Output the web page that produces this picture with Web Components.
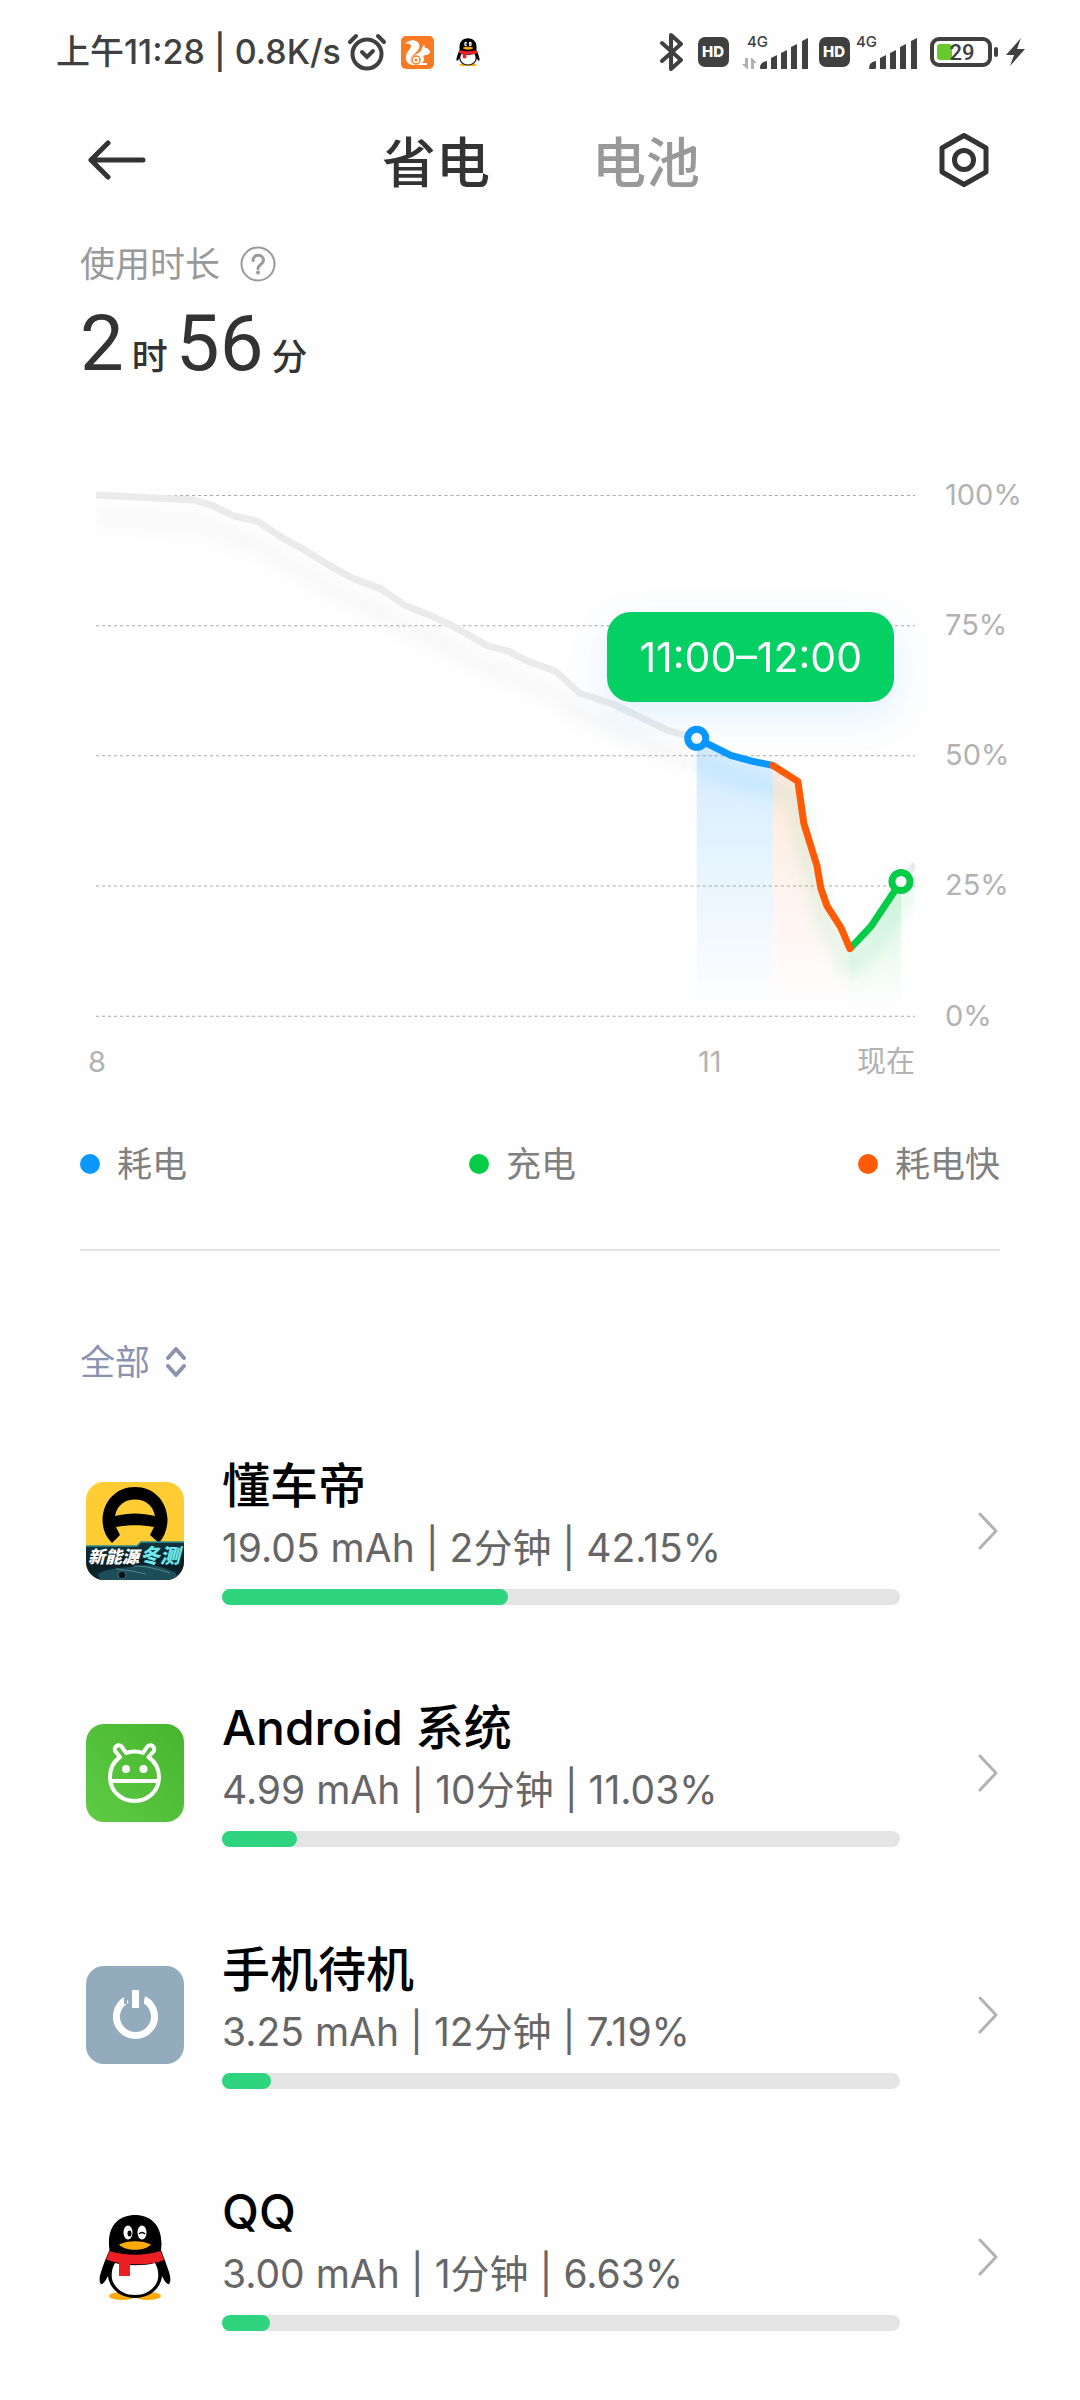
<!DOCTYPE html>
<html lang="zh-CN">
<head>
<meta charset="utf-8">
<meta name="viewport" content="width=device-width, initial-scale=1">
<title>省电</title>
<style>
  html { background: #fefefe; }
  body { margin: 0; font-family: Inter, "Noto Sans CJK SC", sans-serif; color: #333; }
</style>
</head>
<body>
<battery-page>
  <status-bar slot="status" level="29">上午11:28 | 0.8K/s</status-bar>
  <page-header slot="header"><span slot="active">省电</span><span slot="other">电池</span></page-header>
  <usage-time hours="2" minutes="56">使用时长</usage-time>
  <usage-chart>11:00–12:00</usage-chart>
  <chart-legend>
    <legend-item color="#0a98ff">耗电</legend-item>
    <legend-item color="#05cc47">充电</legend-item>
    <legend-item color="#ff5a05">耗电快</legend-item>
  </chart-legend>
  <filter-button>全部</filter-button>
  <app-list slot="list">
    <app-row share="42.15"><dongchedi-icon slot="icon"></dongchedi-icon><span slot="name">懂车帝</span>19.05 mAh | 2分钟 | 42.15%</app-row>
    <app-row share="11.03"><android-icon slot="icon"></android-icon><span slot="name">Android 系统</span>4.99 mAh | 10分钟 | 11.03%</app-row>
    <app-row share="7.19"><standby-icon slot="icon"></standby-icon><span slot="name">手机待机</span>3.25 mAh | 12分钟 | 7.19%</app-row>
    <app-row share="6.63"><qq-icon slot="icon"></qq-icon><span slot="name">QQ</span>3.00 mAh | 1分钟 | 6.63%</app-row>
  </app-list>
</battery-page>

<script>
// Registers an element whose shadow root is built from render(host).
function element(name, render) {
  customElements.define(name, class extends HTMLElement {
    constructor() {
      super();
      const root = this.attachShadow({ mode: 'open' });
      const t = document.createElement('template');
      t.innerHTML = `<style>
        :host { display: block; }
        * { box-sizing: border-box; }
        svg { display: block; flex: none; }
        button { font: inherit; color: inherit; background: none; border: 0; padding: 0; margin: 0; cursor: pointer; }
      </style>` + render(this);
      root.append(t.content.cloneNode(true));
    }
  });
}

element('battery-page', () => `
  <style>
    main { padding: 0 80px; }
  </style>
  <slot name="status"></slot>
  <slot name="header"></slot>
  <main><slot></slot></main>
  <slot name="list"></slot>`);

/* ---------- icons ---------- */
element('dongchedi-icon', () => `
  <style>:host { width: 98px; height: 98px; border-radius: 18px; overflow: hidden; }</style>
  <svg width="98" height="98" viewBox="0 0 98 98" aria-hidden="true">
    <defs><linearGradient id="g" x1="0" y1="0" x2="0" y2="1"><stop offset="0" stop-color="#12343c"/><stop offset=".6" stop-color="#0a1d24"/><stop offset="1" stop-color="#0b2a33"/></linearGradient></defs>
    <rect width="98" height="98" fill="#ffcc33"/>
    <path d="M26 61C19 54 16.500 46 16.500 37 17.500 18 31 5 49 5s31.500 13 32.500 32c0 9-2.500 17-8.500 24L64 53l4-8c-12-2.500-26-2.500-38 0l4 8z" fill="#000"/>
    <path d="M29 34C31 23 39 17.500 49 17.500S67 23 69 34C56 30.500 42 30.500 29 34z" fill="#ffcc33"/>
    <path d="M0 64h51l4-4h43v38H0z" fill="url(#g)"/>
    <path d="M0 64h51l4-4h43" fill="none" stroke="#2b8f92" stroke-width="1.500"/>
    <path d="M12 92c10-6 22-6 32-7 14-4 30-2 46 6l2 7H14z" fill="#1d4d58"/>
    <path d="M30 87c14 1 24 4 30 5M48 84c12 0 24 3 36 7" fill="none" stroke="#4a8b93" stroke-width="1"/>
    <circle cx="36" cy="93" r="4" fill="#081418" stroke="#3b7078"/>
    <text x="2" y="81" font-size="17" font-weight="900" font-style="italic" fill="#fff" font-family="Noto Sans CJK SC, sans-serif">新能源</text>
    <text x="54" y="81" font-size="20" font-weight="900" font-style="italic" fill="#6ee8ea" font-family="Noto Sans CJK SC, sans-serif">冬测</text>
  </svg>`);

element('android-icon', () => `
  <style>:host { width: 98px; height: 98px; border-radius: 18px; overflow: hidden; }</style>
  <svg width="98" height="98" viewBox="0 0 98 98" aria-hidden="true">
    <defs><linearGradient id="g" x1="0" y1="1" x2="1" y2="0"><stop offset="0" stop-color="#5fcb45"/><stop offset="1" stop-color="#47b52d"/></linearGradient></defs>
    <rect width="98" height="98" fill="url(#g)"/>
    <g fill="none" stroke="#fff" stroke-width="4" stroke-linejoin="round">
      <path d="M34 33 29.500 27.500a3.800 3.800 0 0 1 6.500-4.500l4 6c5.500-2 12-2 17 0l4-6a3.800 3.800 0 0 1 6.500 4.500L62.500 33C69.500 38 73 45 73 53c0 14-11 24-24.500 24S24 67 24 53c0-8 3-15 10-20z"/>
      <path d="M24 57h49"/>
    </g>
    <circle cx="40" cy="45" r="4" fill="#fff"/><circle cx="57.500" cy="45" r="4" fill="#fff"/>
  </svg>`);

element('standby-icon', () => `
  <style>:host { width: 98px; height: 98px; border-radius: 18px; overflow: hidden; }</style>
  <svg width="98" height="98" viewBox="0 0 98 98" aria-hidden="true">
    <rect width="98" height="98" fill="#92abbd"/>
    <path d="M58 33.500a19 19 0 1 1-17 0" fill="none" stroke="#fff" stroke-width="7"/>
    <path d="M38 27h3v11h-3zM58 27h-3v11h3z" fill="#92abbd"/>
    <path d="M46 24h7v18h-7z" fill="#fff"/>
  </svg>`);

const penguin = `
    <ellipse cx="36" cy="88" rx="13" ry="4" fill="#faab0b"/><ellipse cx="62" cy="88" rx="13" ry="4" fill="#faab0b"/>
    <path d="M23.500 42C20 18 33 7 49 7s29 11 26 35c3 8 5 13 7 19 3 8 3 13 1 15-2 1-5-4-7-8-1 12-12 22-27 22S23 80 22 68c-2 4-5 9-7 8-2-2-2-7 1-15 2-6 4-11 7.500-19z" fill="#000"/>
    <path d="M29 55c10 3 30 3 40 0 4 7 4 14 2 19-4 8-11 13-22 13s-18-5-22-13c-2-5-2-12 2-19z" fill="#fff"/>
    <ellipse cx="42" cy="24.500" rx="4.500" ry="7" fill="#fff"/><ellipse cx="56" cy="24.500" rx="4.500" ry="7" fill="#fff"/>
    <ellipse cx="43.500" cy="25.500" rx="2" ry="3" fill="#000"/><path d="M53 26q3-3 6 0" fill="none" stroke="#000" stroke-width="1.500"/>
    <path d="M33 36.500c8-4.500 24-4.500 32 0-6 7-26 7-32 0z" fill="#faab0b"/>
    <path d="M23.500 43c16 5 35 5 51 0l3.500 9c-9 4-23 5-34 4v12H33V55c-5-1-9-2-13-3.500z" fill="#eb1f24"/>`;

element('qq-icon', () => `
  <style>:host { width: 98px; height: 98px; }</style>
  <svg width="98" height="98" viewBox="0 0 98 98" aria-hidden="true">${penguin}</svg>`);

element('hd-icon', () => `
  <svg width="31" height="30" viewBox="0 0 31 30" aria-hidden="true">
    <rect width="31" height="30" rx="7" fill="#404040"/>
    <text x="15" y="20" text-anchor="middle" font-size="15" font-weight="800" fill="#fff" font-family="Inter, sans-serif">HD</text>
  </svg>`);

element('signal-icon', host => `
  <svg width="68" height="48" viewBox="0 -6 68 48" aria-hidden="true">
    <text x="6" y="13" font-size="15" font-weight="500" fill="#404040" font-family="Inter, sans-serif">4G</text>
    ${host.hasAttribute('data') ? '<path d="M4 24h3v11H6L1 30h3zM10 35V24h1l5 5h-3v6z" fill="#b0b0b0"/>' : ''}
    <path d="M19 34q0-6 7-7v7q0 1-1 1h-5q-1 0-1-1zM30 24l6-3v14h-6zM40 19l6-3v19h-6zM50 13l6-3v25h-6zM61 7l6-3v31h-6z" fill="#404040"/>
  </svg>`);

/* ---------- status bar ---------- */
element('status-bar', host => `
  <style>
    :host { color: #404040; }
    div { display: flex; align-items: center; }
    .bar { height: 104px; padding: 0 55px 0 56px; justify-content: space-between; }
    .left { font-size: 34px; line-height: 48px; font-weight: 500; }
    .alarm { margin-left: 6px; }
    .uc { margin-left: 14px; }
    .qq { margin-left: 18px; }
    .sim1 { margin: 0 12px 0 14px; }
    .sim2 { margin-left: 10px; }
    .bat { margin: 0 7px 0 12px; }
  </style>
  <div class="bar">
    <div class="left">
      <span><slot></slot></span>
      <svg class="alarm" width="40" height="38" viewBox="0 0 40 38" fill="none" stroke="#404040" stroke-width="4" stroke-linecap="round" aria-hidden="true">
        <circle cx="20" cy="21" r="14.500"/><path d="m15 19 5 5 6-6M3 9l6-6M37 9l-6-6"/>
      </svg>
      <svg class="uc" width="33" height="33" viewBox="0 0 33 33" aria-hidden="true">
        <rect width="33" height="33" rx="5" fill="#fc7a24"/>
        <path d="M4 8c4-5 12-5 14 0 2 5-3 8-7 12-2 3-2 6 0 9-4-1-7-4-6-9 1-5 5-7 5-10 0-2-3-3-6-2z" fill="#fff"/>
        <path d="M21 12l2-4 1 4c3 0 5 2 5 5l-3 2c-2 0-3 0-4 1 2 3 1 5-1 7h5v2H11c-2-3-2-7 1-9 4-3 8-3 9-8z" fill="#fff"/>
        <circle cx="15" cy="24" r="4" fill="none" stroke="#fc7a24" stroke-width="1.500"/><circle cx="15" cy="24" r="1.500" fill="#fc7a24"/>
      </svg>
      <svg class="qq" width="32" height="32" viewBox="0 0 98 98" aria-hidden="true">${penguin}</svg>
    </div>
    <div class="right">
      <svg width="24" height="38" viewBox="0 0 24 38" fill="none" stroke="#404040" stroke-width="4" stroke-linecap="round" stroke-linejoin="round" aria-hidden="true"><path d="m2 10 19 17-10 9V2l10 9L2 28"/></svg>
      <hd-icon class="sim1"></hd-icon>
      <signal-icon data></signal-icon>
      <hd-icon class="sim2"></hd-icon>
      <signal-icon></signal-icon>
      <svg class="bat" width="69" height="30" viewBox="0 0 69 30" aria-hidden="true">
        <rect x="2" y="2" width="58" height="26" rx="7" fill="none" stroke="#404040" stroke-width="4"/>
        <rect x="7" y="7" width="15" height="16" rx="3" fill="#67c92e"/>
        <rect x="64" y="10" width="4" height="10" rx="2" fill="#404040"/>
        <text x="32" y="23" text-anchor="middle" font-size="22" font-weight="500" fill="#404040" font-family="Roboto, sans-serif">${host.getAttribute('level')}</text>
      </svg>
      <svg width="19" height="28" viewBox="0 0 19 28" fill="#404040" aria-hidden="true"><path d="M15 0 0 17h8L4 28 19 11h-8z"/></svg>
    </div>
  </div>`);

/* ---------- header ---------- */
element('page-header', () => `
  <style>
    header { display: flex; align-items: center; justify-content: space-between; height: 112px; padding: 0 88px; }
    nav { display: flex; gap: 102px; font: 500 54px/72px "Noto Sans CJK SC", sans-serif; }
    nav button:last-child { color: #999; }
  </style>
  <header>
    <button aria-label="返回">
      <svg width="58" height="40" viewBox="0 0 58 40" fill="none" stroke="#333" stroke-width="5" stroke-linecap="round" stroke-linejoin="round"><path d="M55 20H3M20 3 3 20l17 17"/></svg>
    </button>
    <nav>
      <button aria-current="page"><slot name="active"></slot></button>
      <button><slot name="other"></slot></button>
    </nav>
    <button aria-label="设置">
      <svg width="56" height="56" viewBox="0 0 56 56" fill="none" stroke="#333" stroke-width="5" stroke-linejoin="round"><path d="M28 3.500 50 16v24L28 52.500 6 40V16z"/><circle cx="28" cy="28" r="9.500"/></svg>
    </button>
  </header>`);

element('usage-time', host => `
  <style>
    .label { display: flex; align-items: center; gap: 20px; padding-top: 24px; font-size: 35px; line-height: 48px; color: #999; }
    .time { display: flex; align-items: baseline; gap: 8px; margin-top: 8px; line-height: 96px; }
    b { font-family: Roboto, sans-serif; font-size: 78px; font-weight: 400; }
    span { font-size: 36px; font-weight: 500; }
  </style>
  <div class="label"><slot></slot>
    <button aria-label="说明">
      <svg width="36" height="36" viewBox="0 0 36 36" fill="none" stroke="#999" stroke-width="2" stroke-linecap="round"><circle cx="18" cy="18" r="16.500"/><path d="M13 14.500c0-7 10.500-7 10.500 0 0 4-5.500 4-5.500 8" stroke-width="3"/><circle cx="18" cy="26.500" r="1" fill="#999"/></svg>
    </button>
  </div>
  <div class="time"><b>${host.getAttribute('hours')}</b><span>时</span><b>${host.getAttribute('minutes')}</b><span>分</span></div>`);

/* ---------- chart ---------- */
const past = 'M96 497 194 502 211 507 234 518 257 523 281 539 301 550 325 565 352 580 381 591 404 607 427 616 449 626 488 648 508 653 527 663 555 673 579 695 613 706 642 720 667 732 696 740';
const drain = '696 740 730 757 752 763 772 767';
const fast = '772 767 797 783 803 825 816 867 820 890 826 907 840 929 849 950';
const charge = '849 950 870 928 900 883';
element('usage-chart', () => `
  <style>
    :host { color: #b2b2b2; font-size: 29px; line-height: 40px; }
    .chart { display: grid; grid-template-columns: 1fr 55px; column-gap: 30px; margin: 70px 0 0 16px; }
    .plot { position: relative; }
    svg { width: 100%; height: auto; overflow: visible; }
    .tip { position: absolute; right: 21px; top: 137px; padding: 0 32px; line-height: 90px; font-size: 41px; color: #fff; background: #05d064; border-radius: 24px; box-shadow: 0 14px 40px rgba(10,152,255,.12); }
    .y { display: flex; flex-direction: column; justify-content: space-between; white-space: nowrap; width: 0; }
    .x { display: grid; grid-template-columns: 610px 1fr auto; margin: 6px 0 0 -8px; }
  </style>
  <div class="chart">
    <div class="plot">
      <svg viewBox="96 477 818 560" role="img" aria-label="电量曲线">
        <defs>
          <linearGradient id="b" gradientUnits="userSpaceOnUse" x1="0" y1="740" x2="0" y2="1010"><stop offset="0" stop-color="#0a98ff" stop-opacity=".18"/><stop offset="1" stop-color="#0a98ff" stop-opacity="0"/></linearGradient>
          <linearGradient id="o" gradientUnits="userSpaceOnUse" x1="0" y1="767" x2="0" y2="1010"><stop offset="0" stop-color="#ff5a05" stop-opacity=".13"/><stop offset="1" stop-color="#ff5a05" stop-opacity="0"/></linearGradient>
          <linearGradient id="g" gradientUnits="userSpaceOnUse" x1="0" y1="883" x2="0" y2="1010"><stop offset="0" stop-color="#05cc47" stop-opacity=".15"/><stop offset="1" stop-color="#05cc47" stop-opacity="0"/></linearGradient>
          <filter id="s" filterUnits="userSpaceOnUse" x="96" y="470" width="818" height="560"><feGaussianBlur stdDeviation="8"/></filter>
          <clipPath id="c"><path d="M96 470h818v560H96z"/></clipPath>
        </defs>
        <path d="M96 497.500h818M96 627.500h818M96 757.500h818M96 887.500h818M96 1017.500h818" stroke="#a8a8a8" stroke-dasharray="3 3"/>
        <path d="M${drain} 772 1017 696 1017z" fill="url(#b)"/>
        <path d="M${fast} 849 1017 772 1017z" fill="url(#o)"/>
        <path d="M${charge} 900 1017 849 1017z" fill="url(#g)"/>
        <g fill="none" stroke-width="7" stroke-linejoin="round" clip-path="url(#c)">
          <g filter="url(#s)" transform="translate(0 22)" stroke-width="14">
            <path d="${past}" stroke="#000" opacity=".03"/>
            <path d="M${drain}" stroke="#0a98ff" opacity=".1"/>
            <path d="M${fast} ${charge} 914 866" stroke="#05cc47" opacity=".11"/>
          </g>
          <path d="${past}M900 883 914 866" stroke="#ebebeb"/>
          <path d="M${drain}" stroke="#0a98ff"/>
          <path d="M${charge}" stroke="#05cc47"/>
          <path d="M${fast}" stroke="#ff5a05" stroke-linecap="round"/>
        </g>
        <g fill="#fff" stroke-width="7"><circle cx="696" cy="740" r="9" stroke="#0a98ff"/><circle cx="900" cy="883" r="9" stroke="#05cc47"/></g>
      </svg>
      <div class="tip"><slot></slot></div>
    </div>
    <div class="y"><span>100%</span><span>75%</span><span>50%</span><span>25%</span><span>0%</span></div>
    <div class="x"><span>8</span><span>11</span><span>现在</span></div>
  </div>`);

element('chart-legend', () => `
  <style>
    div { display: flex; justify-content: space-between; padding: 57px 0 60px; border-bottom: 2px solid #e4e4e4; }
  </style>
  <div><slot></slot></div>`);

element('legend-item', host => `
  <style>
    :host { display: flex; align-items: center; gap: 17px; font-size: 35px; line-height: 50px; color: #808080; }
    i { width: 20px; height: 20px; border-radius: 50%; background: ${host.getAttribute('color')}; }
  </style>
  <i></i><span><slot></slot></span>`);

element('filter-button', () => `
  <style>
    button { display: flex; align-items: center; gap: 16px; margin: 86px 0 25px; font-size: 35px; line-height: 50px; color: #8c93b0; }
  </style>
  <button><slot></slot>
    <svg width="20" height="30" viewBox="0 0 20 30" fill="none" stroke="#8c93b0" stroke-width="4" stroke-linecap="round" stroke-linejoin="round"><path d="m2 11 8-9 8 9M2 19l8 9 8-9"/></svg>
  </button>`);

/* ---------- app list ---------- */
element('app-list', () => `<slot></slot>`);

element('app-row', host => `
  <style>
    a { display: flex; align-items: center; padding: 46px 82px 49px 86px; color: inherit; text-decoration: none; }
    .body { flex: 1; margin: 0 78px 0 38px; }
    .name { font-size: 48px; line-height: 56px; font-weight: 500; color: #000; }
    .info { margin-top: 6px; font-size: 39px; line-height: 56px; color: #666; white-space: nowrap; }
    .track { height: 16px; margin-top: 13px; border-radius: 8px; background: #e4e4e4; }
    .fill { width: ${host.getAttribute('share')}%; min-width: 48px; height: 100%; border-radius: 8px; background: #2fd57e; }
  </style>
  <a href="#">
    <slot name="icon"></slot>
    <div class="body">
      <div class="name"><slot name="name"></slot></div>
      <div class="info"><slot></slot></div>
      <div class="track"><div class="fill"></div></div>
    </div>
    <svg width="20" height="38" viewBox="0 0 20 38" fill="none" stroke="#b2b2b2" stroke-width="3" stroke-linecap="round" stroke-linejoin="round" aria-hidden="true"><path d="m2 2 16 17L2 36"/></svg>
  </a>`);
</script>
</body>
</html>
